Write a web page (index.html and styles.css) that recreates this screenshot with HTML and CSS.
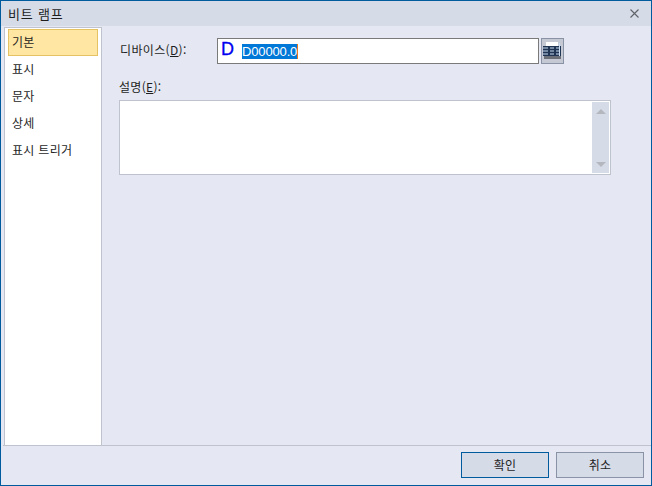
FILE: index.html
```html
<!DOCTYPE html>
<html lang="ko">
  <head>
    <meta charset="UTF-8">
    <title>비트 램프</title>
    <link rel="stylesheet" href="styles.css">
  </head>
  <body>
    <div class="dialog">
      <div class="title-bar">
        <span class="title">비트 램프</span>
        <svg class="close" width="9" height="9" viewBox="0 0 9 9">
          <path d="M0.5 0.5L8.5 8.5M8.5 0.5L0.5 8.5" stroke="#5f6268" stroke-width="1.1" fill="none"/>
        </svg>
      </div>
      <div class="main">
        <ul class="menu">
          <li class="menu-item selected">기본</li>
          <li class="menu-item">표시</li>
          <li class="menu-item">문자</li>
          <li class="menu-item">상세</li>
          <li class="menu-item">표시 트리거</li>
        </ul>
        <div class="form">
          <div class="device-row">
            <label class="device-label">디바이스(<u>D</u>):</label>
            <div class="device-input">
              <span class="device-type">D</span>
              <span class="device-value">D00000.0</span>
            </div>
            <button class="table-button">
              <svg width="19" height="19" viewBox="0 0 19 19">
                <rect x="0" y="4" width="18" height="10" fill="#1f3553"/>
                <rect x="3" y="0" width="12" height="4" fill="#ffffff"/>
                <rect x="1" y="14" width="17" height="3" fill="#6a6f78"/>
                <path d="M0 6H5M7 6H11M13 6H17M0 9H5M7 9H11M13 9H17M0 12H5M7 12H11M13 12H17" stroke="#c9dcf2" stroke-width="1.2"/>
                <path d="M16.5 1V14" stroke="#c9dcf2"/>
              </svg>
            </button>
          </div>
          <label class="desc-label">설명(<u>E</u>):</label>
          <div class="desc-box">
            <div class="scroll">
              <span class="arrow-up"></span>
              <span class="arrow-down"></span>
            </div>
          </div>
        </div>
      </div>
      <div class="footer">
        <button class="btn btn-default">확인</button>
        <button class="btn">취소</button>
      </div>
    </div>
  </body>
</html>
```

FILE: styles.css
```css
html, body {
  margin: 0;
  height: 100%;
  overflow: hidden;
}
body {
  font-family: "Noto Sans CJK KR", "Noto Sans", sans-serif;
  font-size: 12px;
  color: #1e1e1e;
}
.dialog {
  box-sizing: border-box;
  width: 652px;
  height: 486px;
  display: flex;
  flex-direction: column;
  background-color: #e5e8f2;
  border: 1px solid #005a9e;
}
.title-bar {
  height: 25px;
  flex: none;
  display: flex;
  align-items: center;
  justify-content: space-between;
  padding: 0 12px 0 7px;
  background-color: #d6dbe8;
}
.title {
  font-size: 13px;
  letter-spacing: 0.8px;
  margin-top: -1px;
}
.main {
  flex: 1;
  display: flex;
  min-height: 0;
  padding-left: 3px;
  padding-top: 1px;
}
.menu {
  box-sizing: border-box;
  width: 98px;
  margin: 0;
  padding: 1px 3px;
  list-style: none;
  background-color: #ffffff;
  border: 1px solid #bfc3cd;
  border-bottom: 0;
}
.menu-item {
  box-sizing: border-box;
  height: 27px;
  line-height: 23px;
  padding-left: 3px;
  font-size: 12px;
  letter-spacing: 0.3px;
  border: 1px solid transparent;
}
.selected {
  background-color: #ffe6a2;
  border-color: #e5c365;
}
.form {
  flex: 1;
  padding: 11px 0 0 17px;
}
.device-row {
  display: flex;
  align-items: center;
}
.device-label {
  width: 98px;
  padding-left: 1px;
  box-sizing: border-box;
  letter-spacing: 0.35px;
  margin-top: -4px;
}
.device-input {
  box-sizing: border-box;
  width: 322px;
  height: 26px;
  display: flex;
  align-items: center;
  background-color: #ffffff;
  border: 1px solid #7a7a7a;
}
.device-type {
  width: 24px;
  padding-left: 3px;
  box-sizing: border-box;
  font-family: "Liberation Sans", sans-serif;
  font-size: 18px;
  color: #0000f0;
  line-height: 20px;
  margin-top: -5px;
  -webkit-text-stroke: 0.3px #0000f0;
}
.device-value {
  font-family: "Liberation Sans", sans-serif;
  font-size: 13px;
  line-height: 15px;
  height: 15px;
  letter-spacing: -0.15px;
  color: #ffffff;
  background-color: #0078d7;
  border-right: 1px solid #e8781e;
}
.table-button {
  box-sizing: border-box;
  width: 23px;
  height: 26px;
  margin-left: 2px;
  padding: 0;
  display: flex;
  align-items: center;
  justify-content: center;
  background-color: #c4c9d4;
  border: 1px solid #8a93a6;
}
.desc-label {
  display: block;
  margin: 14px 0 4px 0;
  height: 18px;
  line-height: 18px;
  letter-spacing: 0.3px;
}
.desc-box {
  box-sizing: border-box;
  width: 492px;
  height: 75px;
  display: flex;
  justify-content: flex-end;
  padding: 1px;
  background-color: #ffffff;
  border: 1px solid #bfc3cd;
}
.scroll {
  width: 17px;
  display: flex;
  flex-direction: column;
  justify-content: space-between;
  align-items: center;
  padding: 7px 0 6px 0;
  background-color: #d6dbe8;
}
.arrow-up {
  border-left: 5px solid transparent;
  border-right: 5px solid transparent;
  border-bottom: 5px solid #b4b7bd;
}
.arrow-down {
  border-left: 5px solid transparent;
  border-right: 5px solid transparent;
  border-top: 5px solid #b4b7bd;
}
.footer {
  flex: none;
  height: 40px;
  margin-left: 2px;
  display: flex;
  justify-content: flex-end;
  align-items: flex-start;
  gap: 7px;
  padding: 6px 7px 0 0;
  box-sizing: border-box;
  border-top: 1px solid #bfc3cd;
}
.btn {
  box-sizing: border-box;
  width: 88px;
  height: 26px;
  padding: 0 0 1px 0;
  font-family: inherit;
  font-size: 12px;
  letter-spacing: 0.3px;
  color: #1e1e1e;
  background-color: #d6dbe8;
  border: 1px solid #8a93a6;
}
.btn-default {
  border-color: #005a9e;
}
```
